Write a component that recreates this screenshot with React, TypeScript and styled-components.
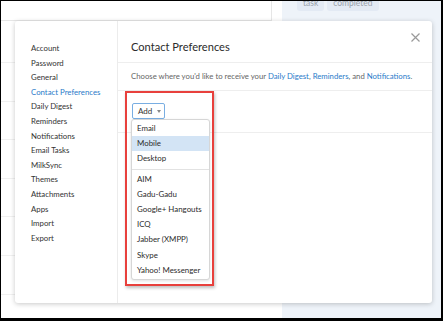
import React from 'react';
import styled, { createGlobalStyle } from 'styled-components';

const GlobalStyle = createGlobalStyle`
  html, body {
    margin: 0;
    padding: 0;
    background: #fff;
  }
  body {
    font-family: Lato, 'Open Sans', sans-serif;
    -webkit-font-smoothing: antialiased;
  }
`;

const Frame = styled.div`
  position: relative;
  box-sizing: border-box;
  width: 443px;
  height: 321px;
  border-style: solid;
  border-color: #000;
  border-width: 1px 2px 3px 1px;
  display: flex;
  overflow: hidden;
  background: #fff;
`;

const ListPane = styled.div`
  width: 281px;
  flex-shrink: 0;
  display: flex;
  flex-direction: column;
  background: #fff;
`;

const SearchBox = styled.div`
  box-sizing: border-box;
  width: 271px;
  height: 20px;
  flex-shrink: 0;
  border-right: 1px solid #e6e6e6;
  border-bottom: 1px solid #e6e6e6;
`;

const TaskRow = styled.div`
  box-sizing: border-box;
  height: ${p => p.$h ?? 38.6}px;
  flex-shrink: 0;
  border-bottom: 1px solid #f0f0f0;
`;

const SidePane = styled.div`
  flex: 1;
  background: #eef3f9;
  display: flex;
  gap: 3px;
  padding-left: 15px;
  align-items: flex-start;
`;

const Tag = styled.span`
  margin-top: -4px;
  height: 14px;
  padding: 0 ${p => p.$pad}px;
  border-radius: 3px;
  background: #e3eaf4;
  color: #9aa3ad;
  font-size: 8.5px;
  line-height: 12px;
`;

const Modal = styled.div`
  position: absolute;
  left: 14px;
  top: 20px;
  width: 417px;
  height: 282px;
  background: #fff;
  border-radius: 3px;
  box-shadow: 0 1px 5px rgba(0, 0, 0, 0.22);
  display: flex;
`;

const Sidebar = styled.nav`
  box-sizing: border-box;
  width: 103px;
  flex-shrink: 0;
  border-right: 1px solid #ececec;
  padding: 20px 0 0 16px;
  display: flex;
  flex-direction: column;
`;

const NavItem = styled.div`
  font-size: 7.8px;
  line-height: 14.6px;
  white-space: nowrap;
  color: ${p => (p.$active ? '#2a7bc9' : '#333')};
`;

const Main = styled.div`
  position: relative;
  flex: 1;
  min-width: 0;
  display: flex;
  flex-direction: column;
`;

const Header = styled.div`
  box-sizing: border-box;
  height: 42px;
  border-bottom: 1px solid #eeeeee;
  padding: 18px 0 0 13px;
`;

const Title = styled.h2`
  margin: 0;
  font-size: 11.1px;
  line-height: 15px;
  font-weight: 400;
  color: #2b2b2b;
`;

const CloseButton = styled.button`
  position: absolute;
  top: 11.5px;
  right: 12.5px;
  width: 9px;
  height: 9px;
  padding: 0;
  border: 0;
  background: none;
  display: flex;
`;

const Section = styled.div`
  box-sizing: border-box;
  height: ${p => p.$h}px;
  border-bottom: 1px solid #eeeeee;
  padding: ${p => p.$pt}px 0 0 ${p => p.$pl}px;
  position: relative;
`;

const Description = styled.p`
  margin: 0;
  font-size: 7.75px;
  line-height: 12px;
  color: #666;
  white-space: nowrap;
`;

const Link = styled.span`
  color: #2a7bc9;
`;

const AddButton = styled.button`
  box-sizing: border-box;
  width: 33px;
  height: 16px;
  padding: 0 0 0 5px;
  border: 1px solid #79aee2;
  border-radius: 2px;
  background: #fff;
  display: flex;
  align-items: center;
  gap: 5px;
  font-family: inherit;
  font-size: 8px;
  color: #333;
`;

const Caret = styled.span`
  width: 0;
  height: 0;
  border-left: 2.5px solid transparent;
  border-right: 2.5px solid transparent;
  border-top: 3px solid #888;
`;

const Menu = styled.div`
  position: absolute;
  left: 13px;
  top: 28px;
  box-sizing: border-box;
  width: 79px;
  padding: 1px 0 1px;
  background: #fff;
  border: 1px solid #d6d6d6;
  border-radius: 3px;
  box-shadow: 0 1px 3px rgba(0, 0, 0, 0.12);
  display: flex;
  flex-direction: column;
`;

const MenuItem = styled.div`
  height: 15.2px;
  line-height: 15.2px;
  padding-left: 5px;
  font-size: 7.9px;
  color: #2b2b2b;
  white-space: nowrap;
  background: ${p => (p.$selected ? '#d3e4f5' : 'transparent')};
`;

const MenuDivider = styled.div`
  height: 1px;
  margin: 2px 0;
  background: #e2e2e2;
`;

const Highlight = styled.div`
  position: absolute;
  left: 7px;
  top: 0;
  box-sizing: border-box;
  width: 89px;
  height: 195px;
  border: 2px solid #e8403c;
  box-shadow: 1px 2px 3px rgba(0, 0, 0, 0.25);
  pointer-events: none;
`;

const navItems = [
  'Account', 'Password', 'General', 'Contact Preferences', 'Daily Digest', 'Reminders',
  'Notifications', 'Email Tasks', 'MilkSync', 'Themes', 'Attachments', 'Apps', 'Import', 'Export'
];

const primaryOptions = ['Email', 'Mobile', 'Desktop'];
const imOptions = ['AIM', 'Gadu-Gadu', 'Google+ Hangouts', 'ICQ', 'Jabber (XMPP)', 'Skype', 'Yahoo! Messenger'];

export default function App() {
  return (
    <>
      <GlobalStyle />
      <Frame>
        <ListPane>
          <SearchBox />
          <TaskRow $h={42} />
          {Array.from({ length: 6 }).map((_, i) => <TaskRow key={i} />)}
        </ListPane>
        <SidePane>
          <Tag $pad={6}>task</Tag>
          <Tag $pad={6}>completed</Tag>
        </SidePane>

        <Modal>
          <Sidebar>
            {navItems.map(item => (
              <NavItem key={item} $active={item === 'Contact Preferences'}>{item}</NavItem>
            ))}
          </Sidebar>
          <Main>
            <Header>
              <Title>Contact Preferences</Title>
            </Header>
            <CloseButton aria-label='Close'>
              <svg width='9' height='9' viewBox='0 0 9 9'>
                <path d='M0.5 0.5 L8.5 8.5 M8.5 0.5 L0.5 8.5' stroke='#9a9a9a' strokeWidth='1.2' fill='none' />
              </svg>
            </CloseButton>
            <Section $h={28} $pt={7} $pl={13}>
              <Description>
                Choose where you&apos;d like to receive your <Link>Daily Digest</Link>, <Link>Reminders</Link>, and <Link>Notifications</Link>.
              </Description>
            </Section>
            <Section $h={42} $pt={12} $pl={14}>
              <AddButton>Add <Caret /></AddButton>
              <Menu>
                {primaryOptions.map(o => (
                  <MenuItem key={o} $selected={o === 'Mobile'}>{o}</MenuItem>
                ))}
                <MenuDivider />
                {imOptions.map(o => <MenuItem key={o}>{o}</MenuItem>)}
              </Menu>
              <Highlight />
            </Section>
          </Main>
        </Modal>
      </Frame>
    </>
  );
}
